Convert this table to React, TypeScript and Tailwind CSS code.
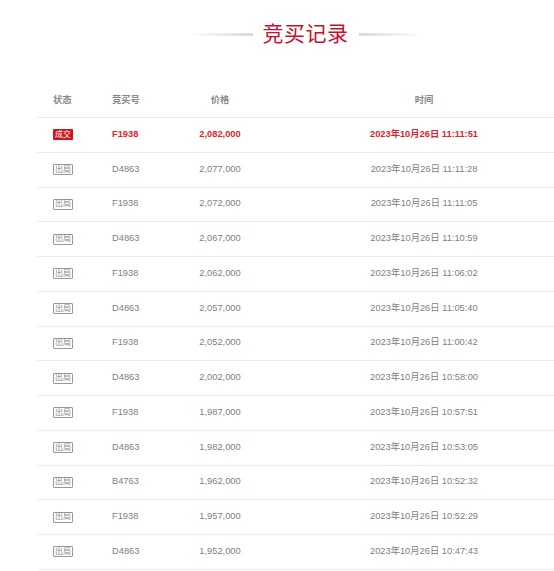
import * as React from "react";

const rows: [string, string, string][] = [
  ["D4863", "2,077,000", "11:11:28"],
  ["F1938", "2,072,000", "11:11:05"],
  ["D4863", "2,067,000", "11:10:59"],
  ["F1938", "2,062,000", "11:06:02"],
  ["D4863", "2,057,000", "11:05:40"],
  ["F1938", "2,052,000", "11:00:42"],
  ["D4863", "2,002,000", "10:58:00"],
  ["F1938", "1,987,000", "10:57:51"],
  ["D4863", "1,982,000", "10:53:05"],
  ["B4763", "1,962,000", "10:52:32"],
  ["F1938", "1,957,000", "10:52:29"],
  ["D4863", "1,952,000", "10:47:43"],
];

function Row({
  badge, code, price, time, win,
}: {
  badge: React.ReactNode; code: string; price: string; time: string; win?: boolean;
}) {
  const txt = win ? "text-[#e0222b] font-bold" : "text-[#808080]";
  return (
    <div className={`flex items-center h-[34.75px] border-b border-[#ececec] ${txt}`}>
      <div className="w-[75px] pl-4 flex items-center">{badge}</div>
      <div className="w-[60px]">{code}</div>
      <div className="w-[96px] text-center">{price}</div>
      <div className="w-[312px] text-center">2023年10月26日 {time}</div>
    </div>
  );
}

export default function App() {
  return (
    <div
      className="w-[554px] h-[571px] overflow-hidden bg-white"
      style={{ fontFamily: '"Liberation Sans", "Noto Sans CJK SC", sans-serif' }}
    >
      {/* Title */}
      <div className="h-[83px] pt-[20px] pl-[37px]">
        <div className="w-[537px] flex items-center justify-center gap-[10px]">
          <div className="w-[63px] h-[3px] bg-gradient-to-r from-transparent to-[#d8d8d8]" />
          <div className="text-[21px] leading-[28px] text-[#c8102e] tracking-[0.5px]">竞买记录</div>
          <div className="w-[63px] h-[3px] bg-gradient-to-l from-transparent to-[#d8d8d8]" />
        </div>
      </div>

      {/* Table */}
      <div className="pl-[37px] text-[9.3px]">
        <div className="w-[543px]">
          <div className="flex items-center h-[35px] pt-[2px] border-b border-[#ececec] text-[#888] font-bold">
            <div className="w-[75px] pl-4">状态</div>
            <div className="w-[60px]">竞买号</div>
            <div className="w-[96px] text-center">价格</div>
            <div className="w-[312px] text-center">时间</div>
          </div>
          <Row
            win
            badge={
              <span className="inline-flex items-center justify-center w-[20px] h-[11px] bg-[#d0121b] text-white text-[8px] font-normal rounded-[1px] leading-none">
                成交
              </span>
            }
            code="F1938"
            price="2,082,000"
            time="11:11:51"
          />
          {rows.map(([code, price, time], i) => (
            <Row
              key={i}
              badge={
                <span className="inline-flex items-center justify-center w-[20px] h-[11px] border border-[#999] text-[#888] text-[8px] rounded-[1px] leading-none">
                  出局
                </span>
              }
              code={code}
              price={price}
              time={time}
            />
          ))}
        </div>
      </div>
    </div>
  );
}
